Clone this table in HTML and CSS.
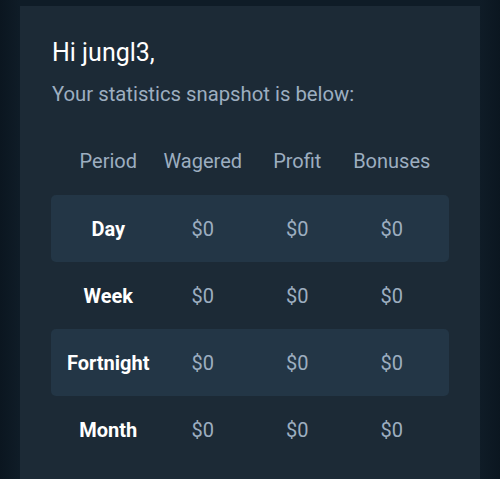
FILE: index.html
```html
<!DOCTYPE html>
<html>
<head>
<meta charset="utf-8">
<link rel="stylesheet" href="styles.css">
</head>
<body>
<div class="page">
  <div class="card">
    <h1 class="greet">Hi jungl3,</h1>
    <p class="intro">Your statistics snapshot is below:</p>
    <div class="table">
      <div class="row head">
        <div>Period</div><div>Wagered</div><div>Profit</div><div>Bonuses</div>
      </div>
      <div class="row alt">
        <div class="period">Day</div><div>$0</div><div>$0</div><div>$0</div>
      </div>
      <div class="row">
        <div class="period">Week</div><div>$0</div><div>$0</div><div>$0</div>
      </div>
      <div class="row alt">
        <div class="period">Fortnight</div><div>$0</div><div>$0</div><div>$0</div>
      </div>
      <div class="row">
        <div class="period">Month</div><div>$0</div><div>$0</div><div>$0</div>
      </div>
    </div>
  </div>
</div>
</body>
</html>
```
FILE: styles.css
```css
html, body {
  margin: 0;
  padding: 0;
  height: 100%;
}
body {
  background: #0d1923;
  font-family: Roboto, "Liberation Sans", sans-serif;
  overflow: hidden;
}
.page {
  padding: 6px 20px 0;
  height: 100%;
  box-sizing: border-box;
  background: linear-gradient(to right, #0b1620 0, #0f1c27 20px, #0f1c27 480px, #0b1620 500px);
}
.card {
  background: #1c2a36;
  height: 100%;
  padding: 32px 31px 0 31px;
  box-sizing: border-box;
}
.greet {
  margin: 0 0 0 1px;
  font-size: 25px;
  font-weight: 400;
  color: #ffffff;
  line-height: 30px;
}
.intro {
  margin: 14px 0 0 1px;
  font-size: 20.3px;
  color: #9daec0;
  line-height: 24px;
}
.table {
  margin-top: 43px;
}
.row {
  display: grid;
  grid-template-columns: repeat(4, 1fr);
  padding: 0 10px;
  height: 67px;
  align-items: center;
  text-align: center;
  font-size: 20px;
  color: #9daec0;
  border-radius: 5px;
}
.row.head {
  height: 46px;
  align-items: start;
  color: #9daec0;
}
.row.alt {
  background: #233646;
}
.period {
  color: #ffffff;
  font-weight: 700;
}
```
